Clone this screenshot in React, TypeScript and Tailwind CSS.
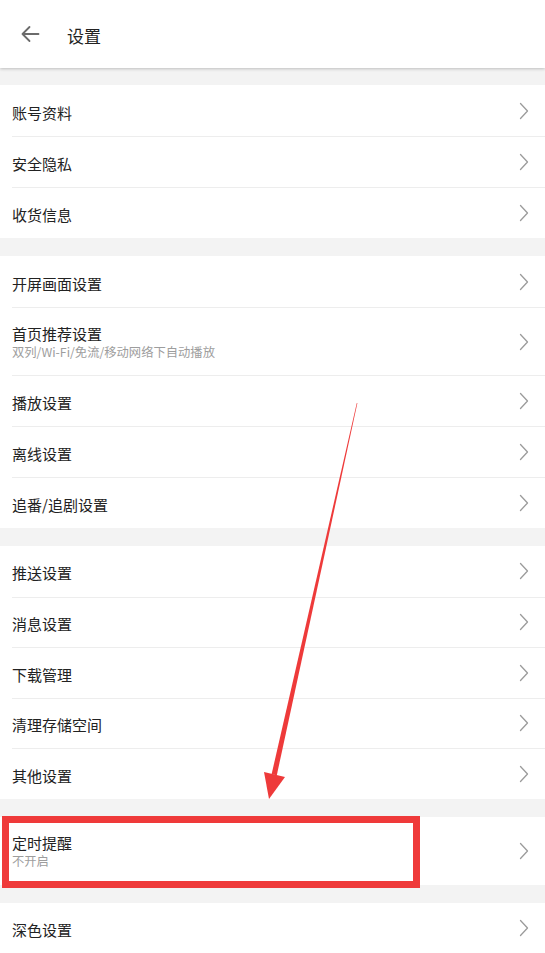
import React from "react";

type SettingItem = {
  title: string;
  subtitle?: string;
};

const sections: { items: SettingItem[]; rowClass?: string }[] = [
  {
    items: [{ title: "账号资料" }, { title: "安全隐私" }, { title: "收货信息" }],
  },
  {
    items: [
      { title: "开屏画面设置" },
      { title: "首页推荐设置", subtitle: "双列/Wi-Fi/免流/移动网络下自动播放" },
      { title: "播放设置" },
      { title: "离线设置" },
      { title: "追番/追剧设置" },
    ],
  },
  {
    items: [
      { title: "推送设置" },
      { title: "消息设置" },
      { title: "下载管理" },
      { title: "清理存储空间" },
      { title: "其他设置" },
    ],
    rowClass: "h-[50.5px]",
  },
  {
    items: [{ title: "定时提醒", subtitle: "不开启" }],
  },
  {
    items: [{ title: "深色设置" }],
  },
];

function ChevronRight() {
  return (
    <svg width="10" height="18" viewBox="0 0 10 18" fill="none">
      <path
        d="M1.5 1.5 L8.5 9 L1.5 16.5"
        stroke="#9b9b9b"
        strokeWidth="1.3"
        strokeLinecap="round"
        strokeLinejoin="round"
      />
    </svg>
  );
}

function BackArrow() {
  return (
    <svg width="20" height="18" viewBox="0 0 20 18" fill="none">
      <path
        d="M18.5 9 H2.5 M9.5 2 L2.5 9 L9.5 16"
        stroke="#6b6b6b"
        strokeWidth="1.8"
        strokeLinecap="round"
        strokeLinejoin="round"
      />
    </svg>
  );
}

function SettingRow({
  item,
  first,
  rowClass,
}: {
  item: SettingItem;
  first: boolean;
  rowClass?: string;
}) {
  const height = item.subtitle ? "h-[68px]" : rowClass ?? "h-[51px]";
  return (
    <div className={`pl-3 ${height}`}>
      <div
        className={`flex h-full items-center pr-4 ${
          first ? "" : "border-t border-[#ededed]"
        }`}
      >
        <div className={`flex flex-1 flex-col ${item.subtitle ? "pt-[2px]" : "pt-[4px]"}`}>
          <span className="text-[15px] leading-[20px] text-[#222]">
            {item.title}
          </span>
          {item.subtitle ? (
            <span className="text-[12.3px] leading-[17px] text-[#9d9d9d]">
              {item.subtitle}
            </span>
          ) : null}
        </div>
        <ChevronRight />
      </div>
    </div>
  );
}

export default function App() {
  return (
    <div
      className="relative min-h-screen bg-[#f3f3f3]"
      style={{ fontFamily: '"Noto Sans CJK SC", "Noto Sans", sans-serif' }}
    >
      <header className="relative z-10 flex h-[68px] items-center bg-white pl-5 shadow-[0_1px_3px_rgba(0,0,0,0.22)]">
        <BackArrow />
        <h1 className="ml-[27px] pt-[3px] text-[17px] font-normal text-[#222]">设置</h1>
      </header>

      <div className="flex flex-col gap-[18px] pt-[17px]">
        {sections.map((section, sectionIndex) => (
          <div key={sectionIndex} className="bg-white">
            {section.items.map((item, index) => (
              <SettingRow
                key={item.title}
                item={item}
                first={index === 0}
                rowClass={section.rowClass}
              />
            ))}
          </div>
        ))}
      </div>

      {/* annotation: red box and arrow */}
      <div className="pointer-events-none absolute left-[2px] top-[816px] h-[72px] w-[418px] border-[7px] border-[#ef3a3a]" />
      <svg
        className="pointer-events-none absolute left-0 top-0"
        width="545"
        height="953"
        viewBox="0 0 545 953"
      >
        <polygon
          points="357.4,403 356.8,402.9 271.6,774.2 276.8,775.2"
          fill="#ee3a3a"
        />
        <polygon points="264,772 285,777 269,799" fill="#ee3a3a" />
      </svg>
    </div>
  );
}
